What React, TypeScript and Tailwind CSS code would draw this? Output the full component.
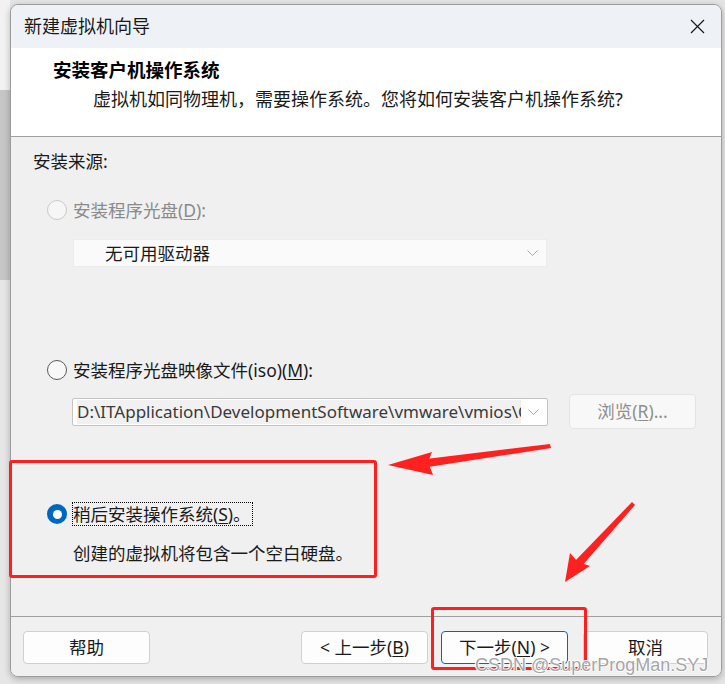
import React from "react";

const font = { fontFamily: '"Noto Sans", "Noto Sans CJK SC", sans-serif' };

function Chevron() {
  return (
    <svg width="11" height="6" viewBox="0 0 11 6" className="shrink-0">
      <path d="M0.5 0.5 L5.5 5.5 L10.5 0.5" fill="none" stroke="#a8a8a8" strokeWidth="1" />
    </svg>
  );
}

function Radio({ state }: { state: "disabled" | "off" | "on" }) {
  if (state === "on") {
    return (
      <span className="flex h-[20px] w-[20px] shrink-0 items-center justify-center rounded-full bg-[#0067c0]">
        <span className="h-[9px] w-[9px] rounded-full bg-white" />
      </span>
    );
  }
  if (state === "disabled") {
    return <span className="h-[20px] w-[20px] shrink-0 rounded-full border border-[#c9c9c9] bg-[#f6f6f6]" />;
  }
  return <span className="h-[20px] w-[20px] shrink-0 rounded-full border border-[#5a5a5a] bg-[#f8f8f8]" />;
}

function Btn({ children, primary, w }: { children: React.ReactNode; primary?: boolean; w: string }) {
  return (
    <div
      className={`flex h-[33px] ${w} items-center justify-center rounded-[4px] bg-[#fdfdfd] text-[17.5px] text-[#1a1a1a] ${
        primary ? "border border-[#0067c0]" : "border border-[#d0d0d0]"
      }`}
    >
      {children}
    </div>
  );
}

export default function App() {
  return (
    <div className="relative flex h-[684px] w-[725px] overflow-hidden bg-[#e4e4e4]" style={font}>
      {/* backdrop strip on the left */}
      <div className="flex w-[10px] shrink-0 flex-col">
        <div className="h-[90px] bg-[#f2f2f2]" />
        <div className="h-[190px] bg-[#c6c6c6]" />
        <div className="flex-1 bg-[#e6e6e6]" />
      </div>

      {/* dialog window */}
      <div className="mt-[4px] flex h-[673px] w-[712px] shrink-0 flex-col overflow-hidden rounded-[8px] border border-[#9c9c9c] shadow-[0_2px_6px_rgba(0,0,0,0.25)]">
        {/* title bar */}
        <div className="flex h-[43px] shrink-0 items-center justify-between bg-[#eef2f6] pl-[13px] pr-[16px]">
          <span className="text-[18px] text-[#1a1a1a]">新建虚拟机向导</span>
          <svg width="15" height="15" viewBox="0 0 15 15">
            <path d="M1 1 L14 14 M14 1 L1 14" stroke="#1a1a1a" strokeWidth="1.2" />
          </svg>
        </div>

        {/* header */}
        <div className="flex h-[89px] shrink-0 flex-col border-b border-[#a0a0a0] bg-white pt-[10px]">
          <div className="h-[24px] pl-[42px] text-[18.5px] leading-[24px] font-bold text-black">安装客户机操作系统</div>
          <div className="mt-[5px] h-[24px] pl-[82px] text-[18px] leading-[24px] text-[#1a1a1a]">
            虚拟机如同物理机，需要操作系统。您将如何安装客户机操作系统?
          </div>
        </div>

        {/* body */}
        <div className="flex flex-1 flex-col border-b border-[#a0a0a0] bg-[#f0f0f0] text-[17.5px]">
          <div className="mt-[12px] h-[24px] pl-[22px] leading-[24px] text-[#1a1a1a]">安装来源:</div>

          <div className="mt-[25px] flex h-[24px] items-center gap-[6px] pl-[36px]">
            <Radio state="disabled" />
            <span className="leading-[24px] text-[#8a8a8a]">
              安装程序光盘(<span className="underline underline-offset-2">D</span>):
            </span>
          </div>

          <div className="ml-[62px] mt-[17px] flex h-[28px] w-[474px] items-center justify-between border border-[#ececec] bg-[#fafafa] pl-[31px] pr-[8px]">
            <span className="text-[#1a1a1a]">无可用驱动器</span>
            <Chevron />
          </div>

          <div className="mt-[91px] flex h-[24px] items-center gap-[6px] pl-[36px]">
            <Radio state="off" />
            <span className="leading-[24px] text-[#1a1a1a]">
              安装程序光盘映像文件(iso)(<span className="underline underline-offset-2">M</span>):
            </span>
          </div>

          <div className="mt-[12px] flex h-[35px] items-center pl-[61px]">
            <div className="flex h-[28px] w-[476px] items-center justify-between overflow-hidden rounded-[2px] border border-[#c4c4c4] bg-white pl-[4px] pr-[8px]">
              <span className="w-[444px] overflow-hidden whitespace-nowrap bg-[#f1f1f1] text-[17px] leading-[24px] text-[#3a3a3a]">
                D:\ITApplication\DevelopmentSoftware\vmware\vmios\C
              </span>
              <Chevron />
            </div>
            <div className="ml-[21px] flex h-[35px] w-[127px] items-center justify-center rounded-[4px] border border-[#e4e4e4] bg-[#f8f8f8] text-[#8f8f8f]">
              浏览(<span className="underline underline-offset-2">R</span>)...
            </div>
          </div>

          <div className="mt-[73px] flex h-[24px] items-center gap-[5px] pl-[36px]">
            <Radio state="on" />
            <span className="border border-dotted border-black pr-[1px] leading-[22px] text-[#1a1a1a]">
              稍后安装操作系统(<span className="underline underline-offset-2">S</span>)。
            </span>
          </div>

          <div className="mt-[15px] h-[24px] pl-[62px] leading-[24px] text-[#1a1a1a]">创建的虚拟机将包含一个空白硬盘。</div>
        </div>

        {/* footer */}
        <div className="flex h-[59px] shrink-0 items-start bg-[#f0f0f0] pl-[12px] pt-[14px]">
          <Btn w="w-[127px]">帮助</Btn>
          <div className="ml-[151px]">
            <Btn w="w-[127px]">
              &lt; 上一步(<span className="underline underline-offset-2">B</span>)
            </Btn>
          </div>
          <div className="ml-[13px]">
            <Btn w="w-[127px]" primary>
              下一步(<span className="underline underline-offset-2">N</span>) &gt;
            </Btn>
          </div>
          <div className="ml-[15px]">
            <Btn w="w-[125px]">取消</Btn>
          </div>
        </div>
      </div>

      {/* annotations */}
      <div className="absolute left-[9px] top-[460px] h-[118px] w-[368px] rounded-[3px] border-[3px] border-[#ff1f1f]" />
      <div className="absolute left-[431px] top-[607px] h-[63px] w-[156px] rounded-[3px] border-[3px] border-[#ff1f1f]" />

      <svg className="pointer-events-none absolute left-0 top-0" width="725" height="684" viewBox="0 0 725 684">
        <polygon points="550,444 551,448 428,467 426,459" fill="#ff2020" />
        <polygon points="388,465 432,452 428,462 433,475" fill="#ff2020" />
        <polygon points="632,502 635,505 581,567 575,561" fill="#ff2020" />
        <polygon points="565,582 570,553 578,562 590,566" fill="#ff2020" />
      </svg>

      <div
        className="absolute left-[475px] top-[654px] text-[18px] leading-[22px] text-[#a6a6a6] [text-shadow:-1px_0_0_#ffffff,1px_0_0_#ffffff,0_1px_0_#ffffff,0_-1px_0_#ffffff]"
        style={{ fontFamily: '"Liberation Sans", Arial, sans-serif' }}
      >
        CSDN @SuperProgMan.SYJ
      </div>
    </div>
  );
}
